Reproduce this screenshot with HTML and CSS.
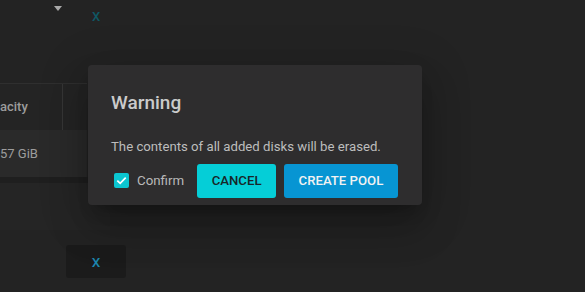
FILE: index.html
```html
<!DOCTYPE html>
<html lang="en">
<head>
<meta charset="utf-8">
<title>Create Pool</title>
<link rel="stylesheet" href="styles.css">
</head>
<body>
<div class="page">
  <div class="top">
    <div class="select"><span class="arrow"></span></div>
    <span class="x-link">X</span>
  </div>
  <div class="table">
    <div class="thead">
      <div class="th first">acity</div>
      <div class="th"></div>
    </div>
    <div class="tr">
      <div class="td first">57 GiB</div>
      <div class="td"></div>
    </div>
  </div>
  <div class="panel"></div>
  <div class="actions-bg">
    <button class="btn-x" type="button">X</button>
  </div>
</div>

<div class="dialog" role="dialog">
  <h2 class="dialog-title">Warning</h2>
  <p class="dialog-body">The contents of all added disks will be erased.</p>
  <div class="dialog-actions">
    <label class="check">
      <span class="box">
        <svg width="15" height="15" viewBox="0 0 15 15"><polyline points="3.3,7.6 6.2,10.4 11.7,4.6" fill="none" stroke="#ffffff" stroke-width="1.7"/></svg>
      </span>
      <span class="check-label">Confirm</span>
    </label>
    <button class="btn btn-cancel" type="button">CANCEL</button>
    <button class="btn btn-create" type="button">CREATE POOL</button>
  </div>
</div>
</body>
</html>
```

FILE: styles.css
```css
html, body {
  margin: 0;
  padding: 0;
}
body {
  width: 585px;
  height: 292px;
  overflow: hidden;
  background: #232323;
  font-family: Roboto, "Liberation Sans", sans-serif;
  position: relative;
}
.page {
  display: flex;
  flex-direction: column;
}
.top {
  height: 83px;
  display: flex;
  align-items: flex-start;
}
.select {
  width: 63px;
  height: 76px;
  display: flex;
  justify-content: flex-end;
  padding-top: 6px;
  box-sizing: border-box;
  padding-right: 1px;
}
.arrow {
  width: 0;
  height: 0;
  border-left: 4.5px solid transparent;
  border-right: 4.5px solid transparent;
  border-top: 5px solid #a9a9a9;
}
.x-link {
  margin-left: 29px;
  margin-top: 9px;
  font-size: 13px;
  font-weight: 500;
  color: #0f5865;
  line-height: 16px;
}
.table {
  width: 87px;
  border-top: 1px solid #2f2f2f;
}
.thead {
  height: 46px;
  display: grid;
  grid-template-columns: 63px 1fr;
  background: #242424;
}
.th {
  font-size: 13px;
  font-weight: 500;
  color: #9c9c9c;
  line-height: 46px;
}
.th.first {
  border-right: 1px solid #363636;
  margin-bottom: 2px;
  line-height: 46px;
}
.tr {
  height: 47px;
  display: grid;
  grid-template-columns: 63px 1fr;
  background: #2a2a2a;
}
.td {
  font-size: 13px;
  color: #9d9d9d;
  line-height: 47px;
}
.panel {
  width: 110px;
  height: 53px;
  box-sizing: border-box;
  border-top: 6px solid #1f1f1f;
  background: #252525;
}
.actions-bg {
  padding: 15px 0 0 66px;
}
.btn-x {
  width: 60px;
  height: 33px;
  border: none;
  border-radius: 3px;
  background: #1b1b1b;
  color: #1d86ae;
  font-family: Roboto, "Liberation Sans", sans-serif;
  font-size: 13.5px;
  font-weight: 500;
  padding: 0;
}

.dialog {
  position: absolute;
  left: 88px;
  top: 65px;
  width: 334px;
  box-sizing: border-box;
  padding: 23px 20px 7px 23px;
  background: #2e2d2e;
  border-radius: 4px;
  box-shadow: 0 11px 15px -7px rgba(0,0,0,.25), 0 24px 38px 3px rgba(0,0,0,.16), 0 9px 46px 8px rgba(0,0,0,.14);
}
.dialog-title {
  margin: 0 0 19px;
  font-size: 19px;
  font-weight: 500;
  line-height: 30.4px;
  color: #cbcbcb;
}
.dialog-body {
  margin: 0 0 6.5px;
  font-size: 13.2px;
  line-height: 20px;
  color: #bdbdbd;
  white-space: nowrap;
}
.dialog-actions {
  display: flex;
  align-items: center;
}
.check {
  display: flex;
  align-items: center;
  margin-left: 3px;
  gap: 8px;
  flex-shrink: 0;
}
.box {
  width: 15px;
  height: 15px;
  border-radius: 2px;
  background: #0bc6d1;
  display: flex;
}
.check-label {
  font-size: 13.3px;
  color: #b9b9b9;
  white-space: nowrap;
}
.btn {
  height: 34px;
  border: none;
  border-radius: 3px;
  padding: 0 14.5px;
  font-family: Roboto, "Liberation Sans", sans-serif;
  font-size: 13.2px;
  font-weight: 500;
  line-height: 34px;
  white-space: nowrap;
  flex-shrink: 0;
}
.btn-cancel {
  margin-left: 13px;
  background: #05ced7;
  color: #182628;
}
.btn-create {
  margin-left: 8px;
  background: #0795d3;
  color: #f2f2f2;
}
```
